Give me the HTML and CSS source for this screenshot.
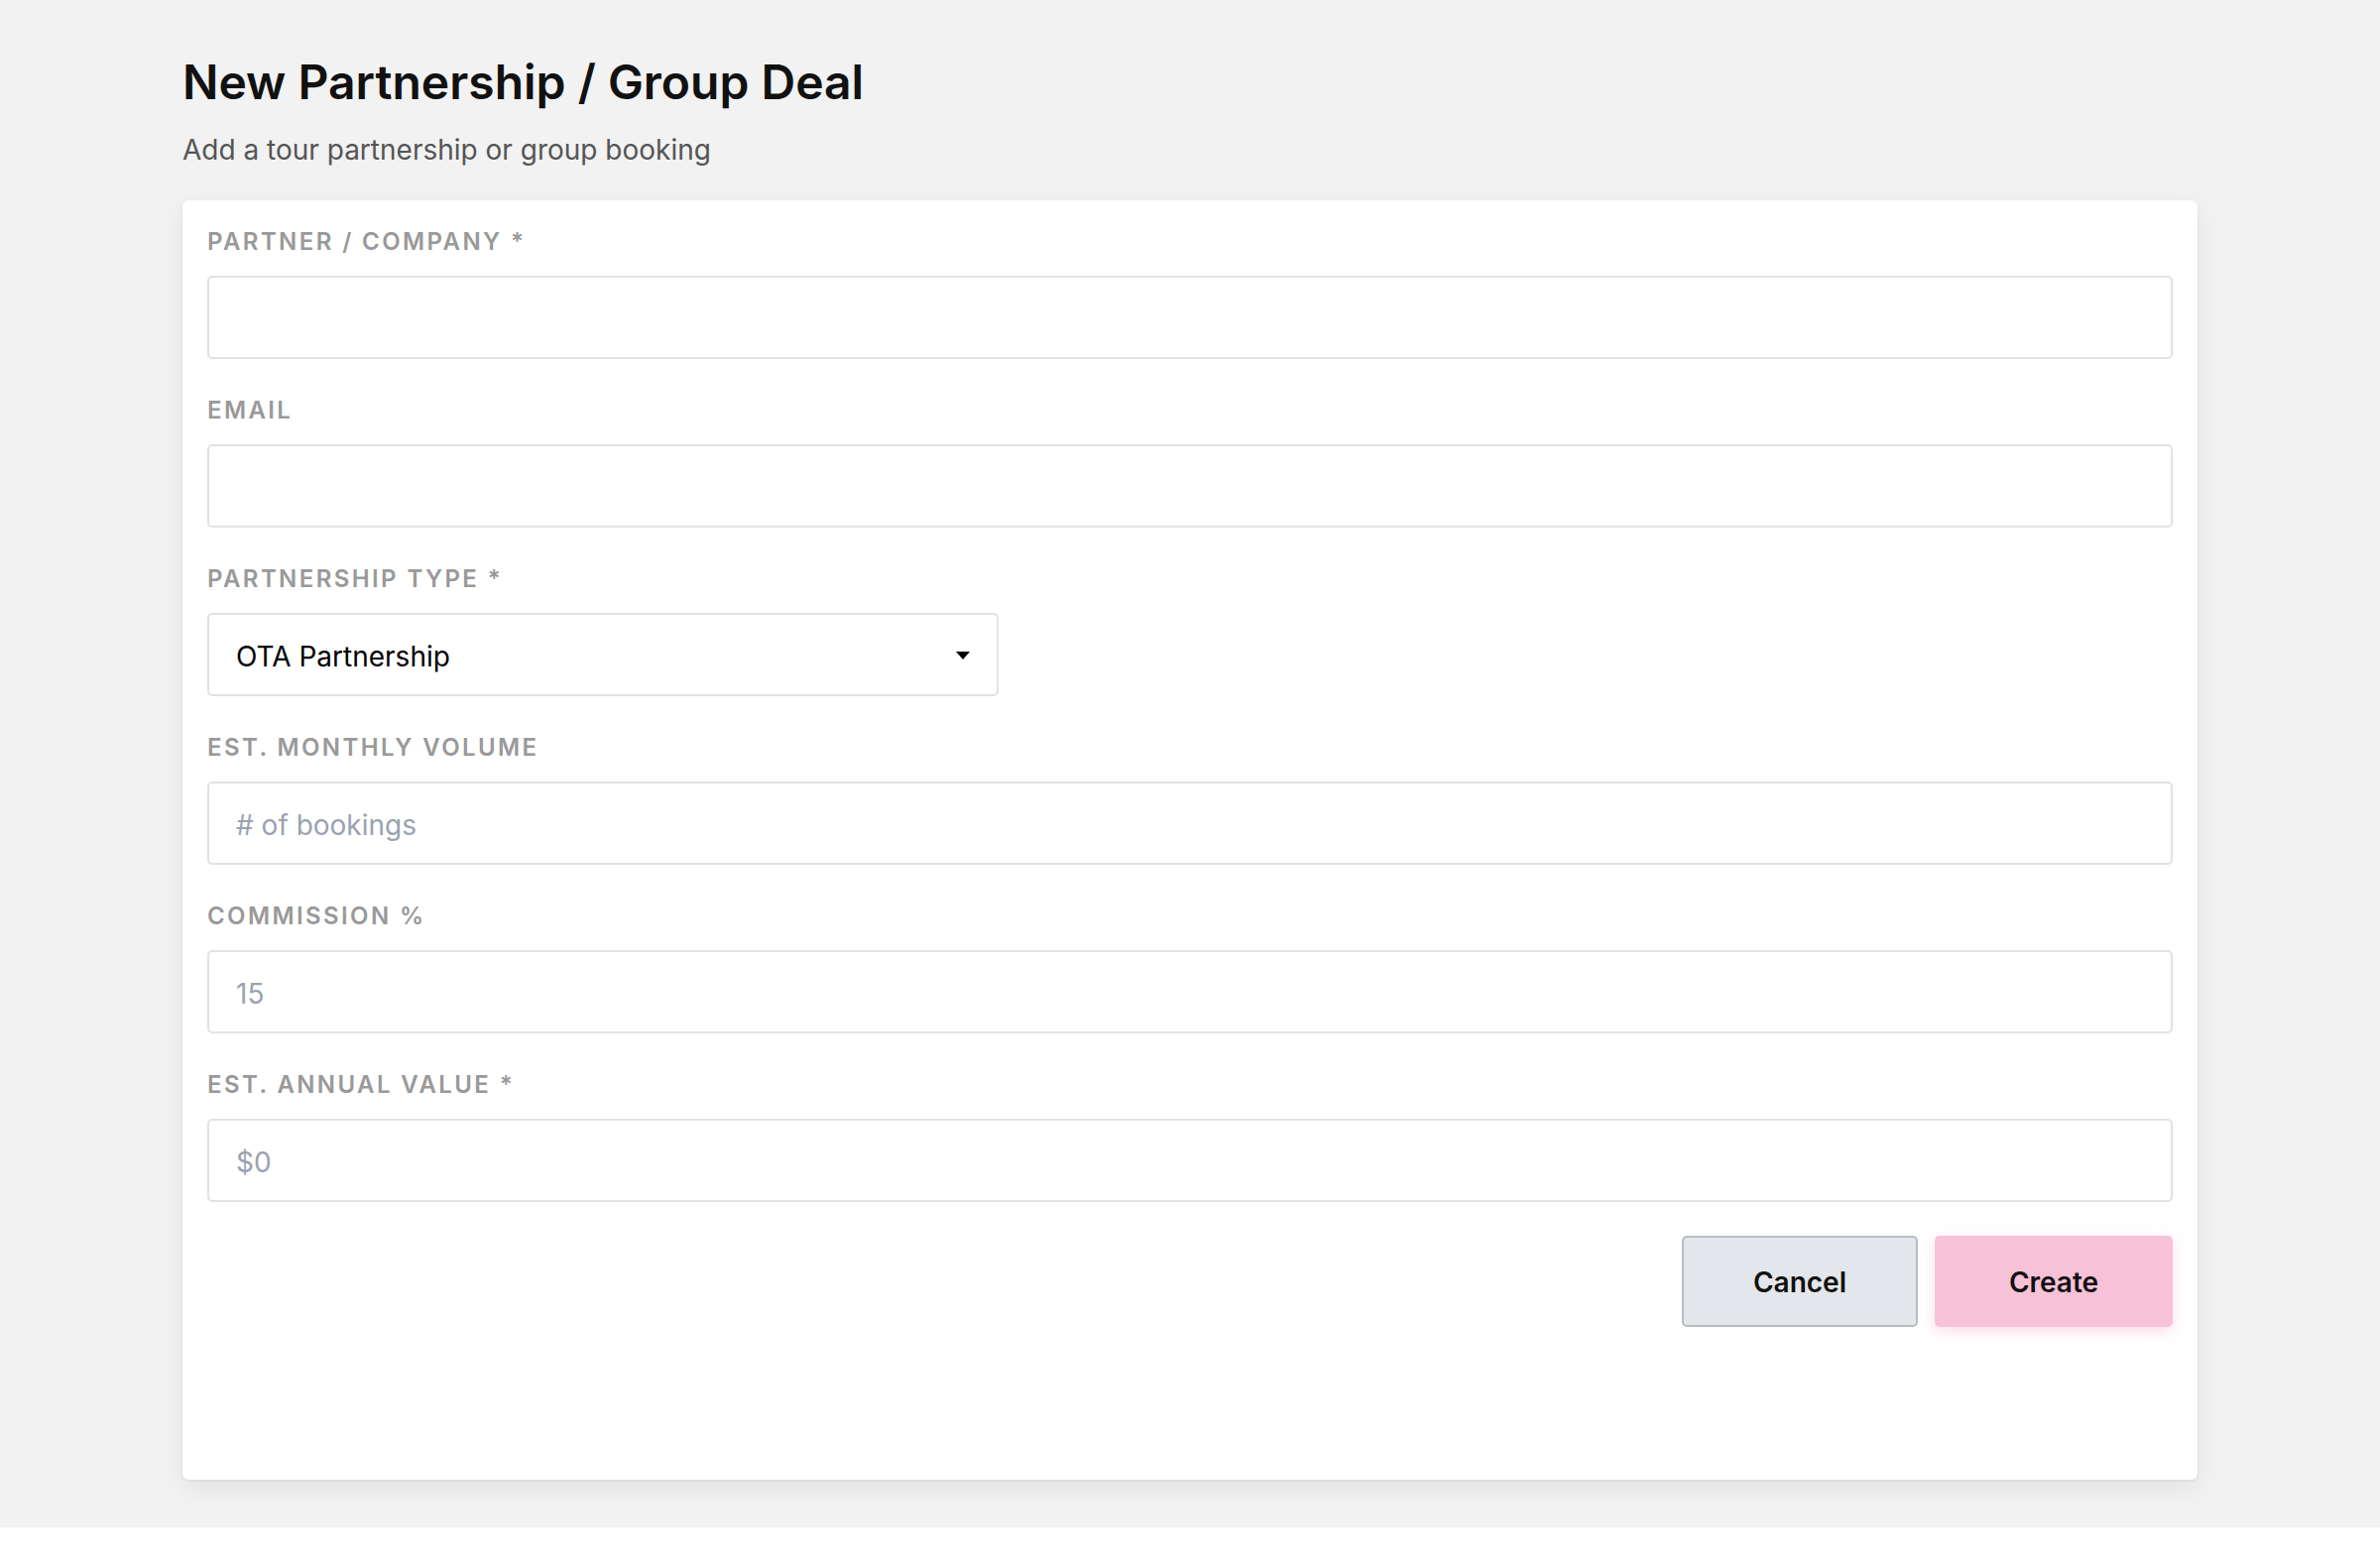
FILE: index.html
```html
<!DOCTYPE html>
<html lang="en">
<head>
<meta charset="utf-8">
<title>New Partnership / Group Deal</title>
<link rel="stylesheet" href="styles.css">
</head>
<body>
<main class="page">
  <header class="page-header">
    <h1 class="title">New Partnership / Group Deal</h1>
    <p class="subtitle">Add a tour partnership or group booking</p>
  </header>
  <form class="card">
    <div class="field">
      <label class="label" for="partner">Partner / Company *</label>
      <input class="input" id="partner" type="text">
    </div>
    <div class="field">
      <label class="label" for="email">Email</label>
      <input class="input" id="email" type="email">
    </div>
    <div class="field">
      <label class="label" for="ptype">Partnership Type *</label>
      <div class="select-wrap">
        <select class="input select" id="ptype">
          <option>OTA Partnership</option>
          <option>Group Booking</option>
          <option>Tour Operator</option>
        </select>
      </div>
    </div>
    <div class="field">
      <label class="label" for="volume">Est. Monthly Volume</label>
      <input class="input" id="volume" type="text" placeholder="# of bookings">
    </div>
    <div class="field">
      <label class="label" for="commission">Commission %</label>
      <input class="input" id="commission" type="text" placeholder="15">
    </div>
    <div class="field">
      <label class="label" for="annual">Est. Annual Value *</label>
      <input class="input" id="annual" type="text" placeholder="$0">
    </div>
    <div class="actions">
      <button type="button" class="btn btn-cancel">Cancel</button>
      <button type="button" class="btn btn-create">Create</button>
    </div>
  </form>
</main>
</body>
</html>
```

FILE: styles.css
```css
* {
  box-sizing: border-box;
}

html, body {
  margin: 0;
  padding: 0;
  background: #ffffff;
  font-family: Inter, "Noto Sans", "Liberation Sans", sans-serif;
}

.page {
  background: #f2f2f2;
  padding: 54px 184px 48px;
}

.page-header {
  margin-bottom: 31px;
}

.title {
  margin: 0;
  font-size: 48px;
  line-height: 58px;
  font-weight: 600;
  color: #111111;
}

.subtitle {
  margin: 19px 0 0;
  font-size: 28px;
  line-height: 40px;
  font-weight: 400;
  color: #555555;
}

.card {
  background: #ffffff;
  border-radius: 6px;
  padding: 24px 25px;
  min-height: 1290px;
  box-shadow: 0 1px 3px rgba(0, 0, 0, 0.08), 0 8px 26px rgba(0, 0, 0, 0.07);
}

.field {
  margin-bottom: 34px;
}

.label {
  display: block;
  font-size: 24px;
  line-height: 28px;
  padding-top: 4px;
  font-weight: 600;
  letter-spacing: 0.1em;
  text-transform: uppercase;
  color: #999999;
  margin-bottom: 20px;
}

.input {
  display: block;
  width: 100%;
  height: 84px;
  border: 2px solid #e2e2e2;
  border-radius: 5px;
  background: #ffffff;
  padding: 3px 27px 0;
  font-family: inherit;
  font-size: 28px;
  color: #111111;
  outline: none;
}

.input::placeholder {
  color: #9aa2b1;
  opacity: 1;
}

.select-wrap {
  position: relative;
  width: 798px;
}

.select {
  appearance: none;
  -webkit-appearance: none;
  color: #000000;
}

.select-wrap::after {
  content: "";
  position: absolute;
  right: 29px;
  top: 50%;
  margin-top: -3px;
  border-left: 7.5px solid transparent;
  border-right: 7.5px solid transparent;
  border-top: 8px solid #000000;
  pointer-events: none;
}

.actions {
  display: flex;
  justify-content: flex-end;
  gap: 17px;
}

.btn {
  height: 92px;
  padding-top: 3px;
  border-radius: 5px;
  font-family: inherit;
  font-size: 28px;
  font-weight: 600;
  color: #111111;
  cursor: pointer;
}

.btn-cancel {
  width: 238px;
  background: #e3e6ea;
  border: 2px solid #b9bdc3;
}

.btn-create {
  width: 240px;
  background: #f7c1d8;
  border: none;
  box-shadow: 0 4px 14px rgba(247, 175, 205, 0.45);
}
```
